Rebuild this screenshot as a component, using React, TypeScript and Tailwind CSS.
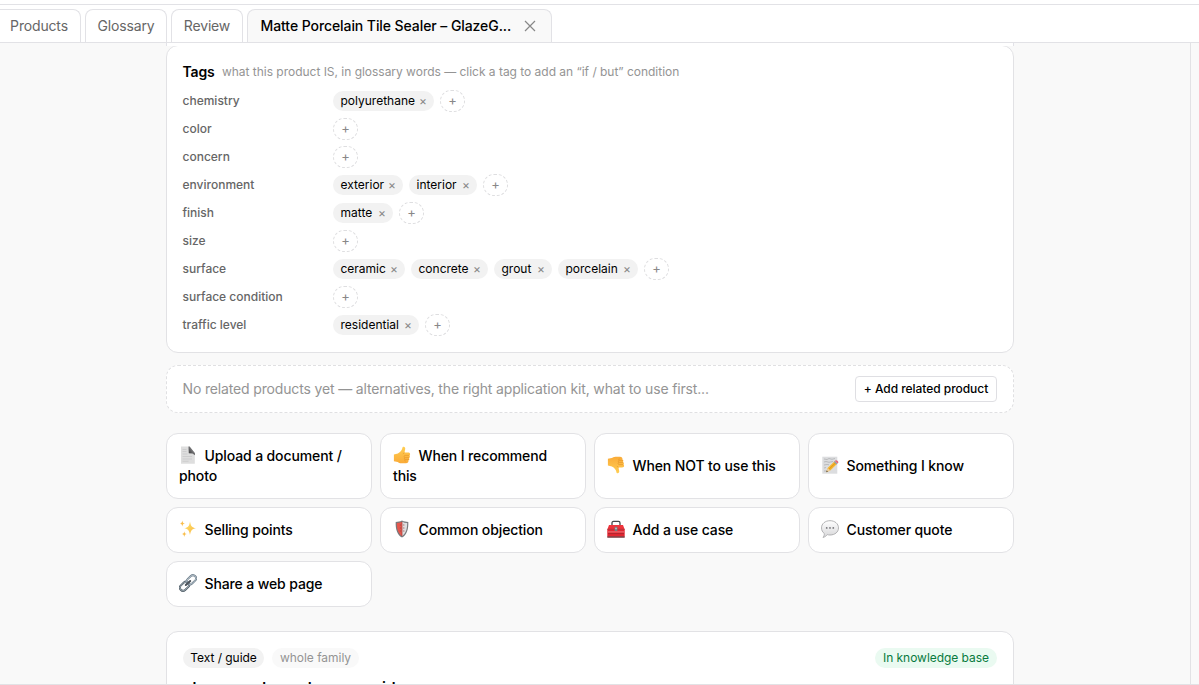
import React from "react";

const svgClass = "mr-[7.500px] inline-block h-[18px] w-[18px] -translate-y-[1px] align-[-4px]";

function Icon({ children }: { children: React.ReactNode }) {
  return (
    <svg viewBox="0 0 18 18" className={svgClass} aria-hidden="true">
      {children}
    </svg>
  );
}

const DocumentIcon = () => (
  <Icon>
    <defs>
      <linearGradient id="fold" x1="0" y1="1" x2="1" y2="0">
        <stop offset="0" stopColor="#2f2f31" />
        <stop offset="1" stopColor="#a9a9ab" />
      </linearGradient>
    </defs>
    <path d="M2 .5h8.200l5.600 6.300v11H2z" fill="#dedede" />
    <path d="M9.500.5h1.200l5.300 6.800v1.900l-2.500-1.700-3.700-.3z" fill="url(#fold)" />
    <path d="M3.500 3.500h4M3.500 5.500h4M3.500 8h5M3.500 10.500h9.500M3.500 13h9.500M3.500 15.300h6" stroke="#c1c1c3" strokeWidth=".6" />
  </Icon>
);

const Thumb = () => (
  <>
    <path d="M10.300.8c1.300-.3 2.100.8 1.900 2.200L11.500 6.600h3.600c1.300 0 2.100.7 2 1.600 0 .6-.3 1-.7 1.200.5.400.6 1 .5 1.500-.1.600-.5.900-.9 1.100.3.400.4.900.2 1.400-.1.500-.5.800-.9 1 .2.300.3.700.1 1.200-.3.900-1 1.700-2.300 1.700H8.600c-2 0-3-.8-3.900-1.400L.9 15.300V8.400l4-1C7.300 6.300 9.200 4 9.500 1.600c.1-.5.300-.7.800-.8z" fill="url(#thumbFill)" />
    <path d="M11.500 6.700l-1.600 1.100M16.300 9.400h-4.300c-1.200 0-1.200 2.200 0 2.300m4-.1h-3.900c-1 .2-1 2 .1 2.200m4-.2h-3.800c-.8.300-.8 1.700 0 1.900" fill="none" stroke="#e39227" strokeWidth=".6" />
  </>
);

const ThumbDefs = () => (
  <defs>
    <linearGradient id="thumbFill" x1="0" y1="0" x2="0" y2="1">
      <stop offset="0" stopColor="#ffce52" />
      <stop offset="1" stopColor="#faab38" />
    </linearGradient>
  </defs>
);

const ThumbUpIcon = () => (
  <Icon>
    <ThumbDefs />
    <Thumb />
  </Icon>
);

const ThumbDownIcon = () => (
  <Icon>
    <ThumbDefs />
    <g transform="matrix(1 0 0 -1 0 18)">
      <Thumb />
    </g>
  </Icon>
);

const MemoIcon = () => (
  <Icon>
    <path d="M1.300.7h15v17h-15z" fill="#dcdddf" />
    <path d="M3 3l3 .5 2-1 3 .8 3-.8M3 6l2-.5 3 .8 4-.8M3 9l3-.5 2 .3M3 12l2-.5M3 15h3" fill="none" stroke="#b0b1b4" strokeWidth=".8" />
    <path d="M5.300 16.200l1.300-4.300 7-6.600 2.600 2.500-7 6.800z" fill="#f4b62f" />
    <path d="M7.700 13.500l7.200-7" stroke="#d98c16" strokeWidth=".8" />
    <path d="M5.300 16.200l1.300-4.300 2.700 2.700z" fill="#efcf9c" />
    <path d="M5.300 16.200l.5-1.600 1.100 1z" fill="#333" />
    <path d="M12.800 6.100l1-1 2.700 2.500-1 1z" fill="#8fa4b0" />
    <path d="M13.800 5.100l.7-.6c1-.7 3.300 1 2.800 2.200l-.8.900z" fill="#e8697a" />
  </Icon>
);

const SparklesIcon = () => (
  <Icon>
    <defs>
      <linearGradient id="spark" x1="0" y1="0" x2="1" y2="1">
        <stop offset="0" stopColor="#ffe56a" />
        <stop offset="1" stopColor="#f9b544" />
      </linearGradient>
    </defs>
    <path d="M11 1.400c.7 4.500 1.700 6 6 6.800-4.300.8-5.300 2.300-6 6.800-.7-4.500-1.700-6-5.800-6.800C9.300 7.400 10.300 5.900 11 1.400z" fill="url(#spark)" />
    <path d="M3.300.6c.3 2 .9 2.700 2.700 3-1.800.3-2.400 1-2.700 3-.3-2-.9-2.700-2.500-3 1.600-.3 2.200-1 2.500-3zM5.300 11.200c.3 2 .9 2.600 2.500 2.900-1.600.3-2.200 1-2.500 2.900-.3-1.900-.9-2.600-2.500-2.900 1.600-.3 2.200-.9 2.500-2.900z" fill="#f9bd4b" />
  </Icon>
);

const ShieldIcon = () => (
  <Icon>
    <path d="M9 .4c2 1 4 1.400 6.300 1.500.3 6.800-1.300 12.600-6.300 15.700C4 14.500 2.400 8.700 2.700 1.900 5 1.800 7 1.400 9 .4z" fill="#77797c" />
    <path d="M9 1.700c1.700.8 3.400 1.200 5.200 1.300 0 5.600-1.200 10.400-5.200 13.200z" fill="#dedfe0" />
    <path d="M9 1.700C7.300 2.500 5.600 2.900 3.800 3c0 5.600 1.200 10.400 5.200 13.200z" fill="#e5574d" />
    <path d="M9 2v14" stroke="#aa4643" strokeWidth=".8" />
    <path d="M7.400 4.500v8M10.800 4.500v8" stroke="#9b4846" strokeWidth="1" strokeDasharray="1 2" />
  </Icon>
);

const ToolboxIcon = () => (
  <Icon>
    <path d="M5 5.500V3c0-1 .5-1.600 1.500-1.600h5c1 0 1.500.6 1.500 1.600v2.500" fill="none" stroke="#45474a" strokeWidth="1.300" />
    <path d="M2 5h14l1.700 4.500H.3z" fill="#ee343c" />
    <path d="M.3 9.300h17.400v7.300H.3z" fill="#e32631" />
    <path d="M.3 16.300h17.400v1.400H.3z" fill="#6d262b" />
    <path d="M.3 9.300h17.400M1 13.600h16" stroke="#9c242d" strokeWidth=".7" />
    <path d="M1 11.900h16" stroke="#ee8d90" strokeWidth=".8" />
    <rect x="7.600" y="6.700" width="2.800" height="4.300" rx=".4" fill="#747b80" />
    <path d="M8.300 7.700h1.400v1.500H8.300z" fill="#c9ced0" />
  </Icon>
);

const SpeechIcon = () => (
  <Icon>
    <defs>
      <linearGradient id="speech" x1="0" y1="0" x2="0" y2="1">
        <stop offset="0" stopColor="#fff" />
        <stop offset="1" stopColor="#d6d6d8" />
      </linearGradient>
    </defs>
    <path d="M9 .7c4.800 0 8.500 3 8.500 7.200S13.800 15 9 15c-1 0-1.900-.1-2.700-.4-.9 1.200-2.300 2.400-4.300 2.800.9-1.100 1.400-2.300 1.300-3.900C1.500 12.200.5 10.200.5 7.900.5 3.700 4.200.7 9 .7z" fill="url(#speech)" stroke="#aaaaad" strokeWidth=".9" />
    <circle cx="5.700" cy="7.900" r=".9" fill="#77777b" />
    <circle cx="9" cy="7.900" r=".9" fill="#77777b" />
    <circle cx="12.300" cy="7.900" r=".9" fill="#77777b" />
  </Icon>
);

const ChainIcon = () => (
  <Icon>
    <g fill="none" transform="rotate(-43 9 9)">
      <rect x="-.9" y="5.900" width="10.300" height="6.200" rx="3.100" stroke="#4d5a64" strokeWidth="2" />
      <rect x="-.9" y="5.900" width="10.300" height="6.200" rx="3.100" stroke="#a8b5be" strokeWidth=".8" />
      <rect x="8.600" y="5.900" width="10.300" height="6.200" rx="3.100" stroke="#6c7d8a" strokeWidth="2" />
      <rect x="8.600" y="5.900" width="10.300" height="6.200" rx="3.100" stroke="#c2cdd5" strokeWidth=".8" />
      <path d="M6 9h6" stroke="#4b5259" strokeWidth="2" strokeLinecap="round" />
    </g>
  </Icon>
);

type Tag = { label: string; width: string };

const tags: { name: string; values: Tag[] }[] = [
  { name: "chemistry", values: [{ label: "polyurethane", width: "w-[101px]" }] },
  { name: "color", values: [] },
  { name: "concern", values: [] },
  {
    name: "environment",
    values: [
      { label: "exterior", width: "w-[70px]" },
      { label: "interior", width: "w-[68px]" },
    ],
  },
  { name: "finish", values: [{ label: "matte", width: "w-[60px]" }] },
  { name: "size", values: [] },
  {
    name: "surface",
    values: [
      { label: "ceramic", width: "w-[72px]" },
      { label: "concrete", width: "w-[77px]" },
      { label: "grout", width: "w-[58px]" },
      { label: "porcelain", width: "w-[80px]" },
    ],
  },
  { name: "surface condition", values: [] },
  { name: "traffic level", values: [{ label: "residential", width: "w-[86px]" }] },
];

const actions = [
  { icon: DocumentIcon, label: "Upload a document / photo" },
  { icon: ThumbUpIcon, label: "When I recommend this" },
  { icon: ThumbDownIcon, label: "When NOT to use this" },
  { icon: MemoIcon, label: "Something I know" },
  { icon: SparklesIcon, label: "Selling points" },
  { icon: ShieldIcon, label: "Common objection" },
  { icon: ToolboxIcon, label: "Add a use case" },
  { icon: SpeechIcon, label: "Customer quote" },
  { icon: ChainIcon, label: "Share a web page" },
];

function Tab({ label, className }: { label: string; className: string }) {
  return (
    <button className={`h-[33px] shrink-0 rounded-t-[8px] border border-b-0 border-[#e2e2e6] bg-white text-[14px] leading-[32px] tracking-[-0.16px] text-[#666] ${className}`}>
      {label}
    </button>
  );
}

function TagsCard() {
  return (
    <section className="h-[308px] shrink-0 rounded-[12px] border border-[#e2e2e5] bg-white px-[15.500px] pt-[16px]">
      <div className="flex h-[20px] items-center">
        <h2 className="w-[39.500px] pb-[2px] text-[14px] font-semibold tracking-[-0.15px]">Tags</h2>
        <p className="text-[12px] tracking-[-0.022px] text-[#949494]">
          what this product IS, in glossary words — click a tag to add an “if / but” condition
        </p>
      </div>
      <div className="mt-[5px]">
        {tags.map((tag) => (
          <div key={tag.name} className="flex h-[28px] items-center">
            <span className="w-[150.500px] text-[12px] font-medium text-[#666]">{tag.name}</span>
            <div className="flex items-center gap-[6px]">
              {tag.values.map(({ label, width }) => (
                <span key={label} className={`flex h-[20px] items-center justify-between rounded-full bg-[#f2f2f2] pl-[7.500px] pr-[7px] text-[12px] ${width}`}>
                  {label}
                  <button className="text-[12px] text-[#888]">×</button>
                </span>
              ))}
              <button className="flex h-[22px] w-[25px] items-center justify-center rounded-full border border-dashed border-[#dedee0] text-[13px] text-[#888]">
                +
              </button>
            </div>
          </div>
        ))}
      </div>
    </section>
  );
}

export default function App() {
  return (
    <div className="flex h-[685px] w-[1199px] flex-col overflow-hidden bg-white font-['Inter',sans-serif] text-black">
      <div className="mt-[4px] flex h-[39px] shrink-0 items-end gap-[4px] border-y border-[#e2e2e6]">
        <Tab label="Products" className="-ml-[10px] w-[91px] pl-[7px]" />
        <Tab label="Glossary" className="w-[82px]" />
        <Tab label="Review" className="w-[72px]" />
        <div className="flex h-[33px] w-[305px] items-center rounded-t-[8px] border border-b-0 border-[#e2e2e6] bg-[#f9f9f9] pl-[12.500px] text-[14px] font-medium">
          <span className="w-[262px] whitespace-nowrap pb-[2px] tracking-[-0.08px]">Matte Porcelain Tile Sealer – GlazeG...</span>
          <svg viewBox="0 0 12 12" className="ml-[1px] h-[12px] w-[12px]" aria-hidden="true">
            <path d="M1 1l10 10M11 1L1 11" stroke="#888" strokeWidth="1.200" />
          </svg>
        </div>
      </div>
      <div className="flex h-[642px] border-b border-[#e2e2e5] bg-[#f9f9f9]">
        <main className="flex h-[641px] w-[1191px] flex-col overflow-hidden border-r border-[#e2e2e5] pl-[166px] pr-[176px]">
          <div className="z-10 h-[3px] shrink-0 border-x border-[#e2e2e8] bg-white" />
          <div className="-mt-px flex h-[639px] flex-col [clip-path:inset(1px_0_0_0)]">
            <TagsCard />
            <section className="mt-[12px] flex h-[48px] shrink-0 items-center justify-between rounded-[12px] border border-dashed border-[#e0e0e2] bg-white pl-[15.500px] pr-[16px]">
              <p className="pb-[2px] text-[14px] tracking-[-0.155px] text-[#949494]">
                No related products yet — alternatives, the right application kit, what to use first...
              </p>
              <button className="h-[26px] w-[142px] whitespace-nowrap rounded-[4px] border border-[#dfdfe3] text-[12px] font-medium tracking-[-0.04px]">
                + Add related product
              </button>
            </section>
            <section className="mt-[20px] grid shrink-0 grid-cols-4 grid-rows-[66px_46px_46px] gap-[8px]">
              {actions.map(({ icon: ActionIcon, label }) => (
                <button key={label} className="flex items-center rounded-[12px] border border-[#e2e2e5] bg-white px-[12px] text-left text-[14px] font-medium leading-[20px] tracking-[-0.12px]">
                  <span>
                    <ActionIcon />
                    {label}
                  </span>
                </button>
              ))}
            </section>
            <section className="mt-[24px] h-[140px] shrink-0 rounded-[12px] border border-[#e2e2e5] bg-white px-[16px] pt-[16px]">
              <div className="flex h-[20px] items-center text-[12px] leading-[20px] tracking-[-0.04px]">
                <span className="w-[81px] rounded-full bg-[#f2f2f2] text-center">Text / guide</span>
                <span className="ml-[8px] w-[87px] rounded-full bg-[#f9f9f9] text-center text-[#949494]">whole family</span>
                <span className="ml-auto w-[122px] rounded-full bg-[#eafaf1] text-center text-[#087a3e]">In knowledge base</span>
              </div>
              <h3 className="mt-[8px] text-[15px] font-semibold leading-[24px] tracking-[0.22px]">glazeguard counter use guide</h3>
            </section>
          </div>
        </main>
      </div>
    </div>
  );
}
